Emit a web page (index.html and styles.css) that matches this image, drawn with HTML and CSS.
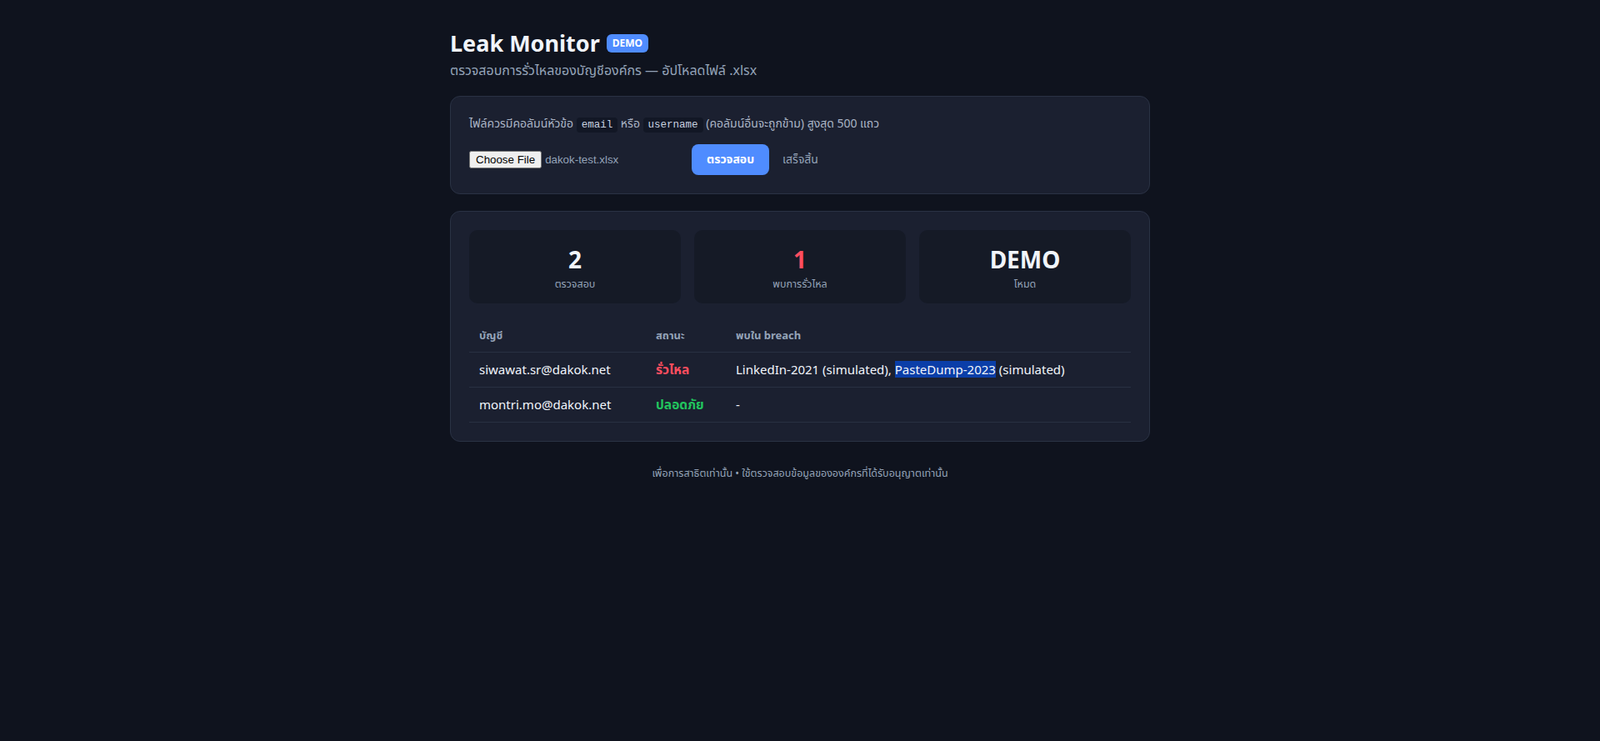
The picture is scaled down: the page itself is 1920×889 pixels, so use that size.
FILE: index.html
```html
<!DOCTYPE html>
<html lang="th">

<head>
    <meta charset="UTF-8">
    <meta name="viewport" content="width=device-width, initial-scale=1.0">
    <title>Leak Monitor</title>
    <link rel="stylesheet" href="styles.css">
</head>

<body>
    <div class="container">
        <header class="page-head">
            <h1>Leak Monitor <span class="badge">DEMO</span></h1>
            <p class="subtitle">ตรวจสอบการรั่วไหลของบัญชีองค์กร — อัปโหลดไฟล์ .xlsx</p>
        </header>

        <section class="card upload-card">
            <p class="hint">ไฟล์ควรมีคอลัมน์หัวข้อ <code>email</code> หรือ <code>username</code> (คอลัมน์อื่นจะถูกข้าม) สูงสุด 500 แถว</p>
            <div class="upload-row">
                <input type="file" id="file" accept=".xlsx">
                <button class="btn-check">ตรวจสอบ</button>
                <span class="status">เสร็จสิ้น</span>
            </div>
        </section>

        <section class="card result-card">
            <div class="stats">
                <div class="stat">
                    <div class="stat-value">2</div>
                    <div class="stat-label">ตรวจสอบ</div>
                </div>
                <div class="stat">
                    <div class="stat-value leaked">1</div>
                    <div class="stat-label">พบการรั่วไหล</div>
                </div>
                <div class="stat">
                    <div class="stat-value">DEMO</div>
                    <div class="stat-label">โหมด</div>
                </div>
            </div>

            <table class="results">
                <thead>
                    <tr>
                        <th class="col-account">บัญชี</th>
                        <th class="col-status">สถานะ</th>
                        <th>พบใน breach</th>
                    </tr>
                </thead>
                <tbody>
                    <tr>
                        <td>siwawat.sr@dakok.net</td>
                        <td class="bad">รั่วไหล</td>
                        <td>LinkedIn-2021 (simulated), <span class="picked">PasteDump-2023</span> (simulated)</td>
                    </tr>
                    <tr>
                        <td>montri.mo@dakok.net</td>
                        <td class="ok">ปลอดภัย</td>
                        <td>-</td>
                    </tr>
                </tbody>
            </table>
        </section>

        <footer class="foot">เพื่อการสาธิตเท่านั้น • ใช้ตรวจสอบข้อมูลขององค์กรที่ได้รับอนุญาตเท่านั้น</footer>
    </div>

    <script>
        try {
            const dt = new DataTransfer();
            dt.items.add(new File([''], 'dakok-test.xlsx'));
            document.getElementById('file').files = dt.files;
        } catch (e) {}
    </script>
</body>

</html>
```

FILE: styles.css
```css
* {
    margin: 0;
    padding: 0;
    box-sizing: border-box;
}

body {
    min-height: 100vh;
    background: #0f131e;
    color: #e5e9f0;
    font-family: 'Segoe UI', 'Noto Sans', 'Noto Sans Thai', 'Leelawadee UI', Tahoma, sans-serif;
}

.container {
    max-width: 840px;
    margin: 0 auto;
    padding-top: 36px;
}

.page-head {
    margin-bottom: 18px;
}

h1 {
    display: flex;
    align-items: center;
    gap: 8px;
    font-size: 27px;
    line-height: 1.2;
    font-weight: 700;
    color: #f1f5fb;
}

.badge {
    background: #4f8cff;
    color: #fff;
    font-size: 12px;
    font-weight: 700;
    padding: 2px 7px;
    border-radius: 6px;
    line-height: 18px;
}

.subtitle {
    margin-top: 5px;
    font-size: 16px;
    color: #94a3b8;
}

.card {
    background: #1b2030;
    border: 1px solid #2a3244;
    border-radius: 12px;
    padding: 22px;
}

.upload-card {
    margin-bottom: 20px;
}

.hint {
    font-size: 14px;
    line-height: 20px;
    color: #aab4c5;
}

code {
    font-family: 'Liberation Mono', 'DejaVu Sans Mono', monospace;
    font-size: 12.5px;
    background: #121725;
    color: #c9d2e0;
    padding: 2px 6px;
    border-radius: 4px;
}

.upload-row {
    display: flex;
    align-items: center;
    gap: 14px;
    margin-top: 13px;
}

input[type="file"] {
    width: 253px;
    color: #94a3b8;
    font-family: 'Liberation Sans', Arial, sans-serif;
    font-size: 13.33px;
}

.btn-check {
    padding: 0 18px;
    height: 37px;
    border: none;
    border-radius: 8px;
    background: #4f8cff;
    color: #fff;
    font-family: inherit;
    font-size: 14px;
    font-weight: 700;
    cursor: pointer;
}

.btn-check:hover {
    background: #3d7af0;
}

.status {
    margin-left: 2px;
    font-size: 14px;
    color: #94a3b8;
}

.stats {
    display: grid;
    grid-template-columns: repeat(3, 1fr);
    gap: 16px;
}

.stat {
    background: #151a26;
    border-radius: 10px;
    padding: 16px 12px 14px;
    text-align: center;
}

.stat-value {
    font-size: 28px;
    font-weight: 700;
    line-height: 38px;
    color: #f1f5fb;
}

.stat-value.leaked {
    color: #ff4d5e;
}

.stat-label {
    margin-top: 2px;
    font-size: 12.5px;
    line-height: 18px;
    color: #94a3b8;
}

.results {
    width: 100%;
    margin-top: 19px;
    border-collapse: collapse;
    font-size: 15px;
}

.results th {
    text-align: left;
    font-size: 13px;
    font-weight: 700;
    color: #94a3b8;
    padding: 10px 12px 9px;
    border-bottom: 1px solid #283042;
}

.results td {
    padding: 11px 12px;
    line-height: 19px;
    border-bottom: 1px solid #283042;
    color: #f1f5fb;
}

.col-account {
    width: 212px;
}

.col-status {
    width: 96px;
}

.results td.bad,
.results td.ok {
    font-size: 15.5px;
    font-weight: 700;
}

.results td.bad {
    color: #ff4d5e;
}

.results td.ok {
    color: #22c55e;
}

.picked {
    background: #0a3ea8;
}

.foot {
    margin-top: 29px;
    text-align: center;
    font-size: 12.5px;
    color: #94a3b8;
}
```
